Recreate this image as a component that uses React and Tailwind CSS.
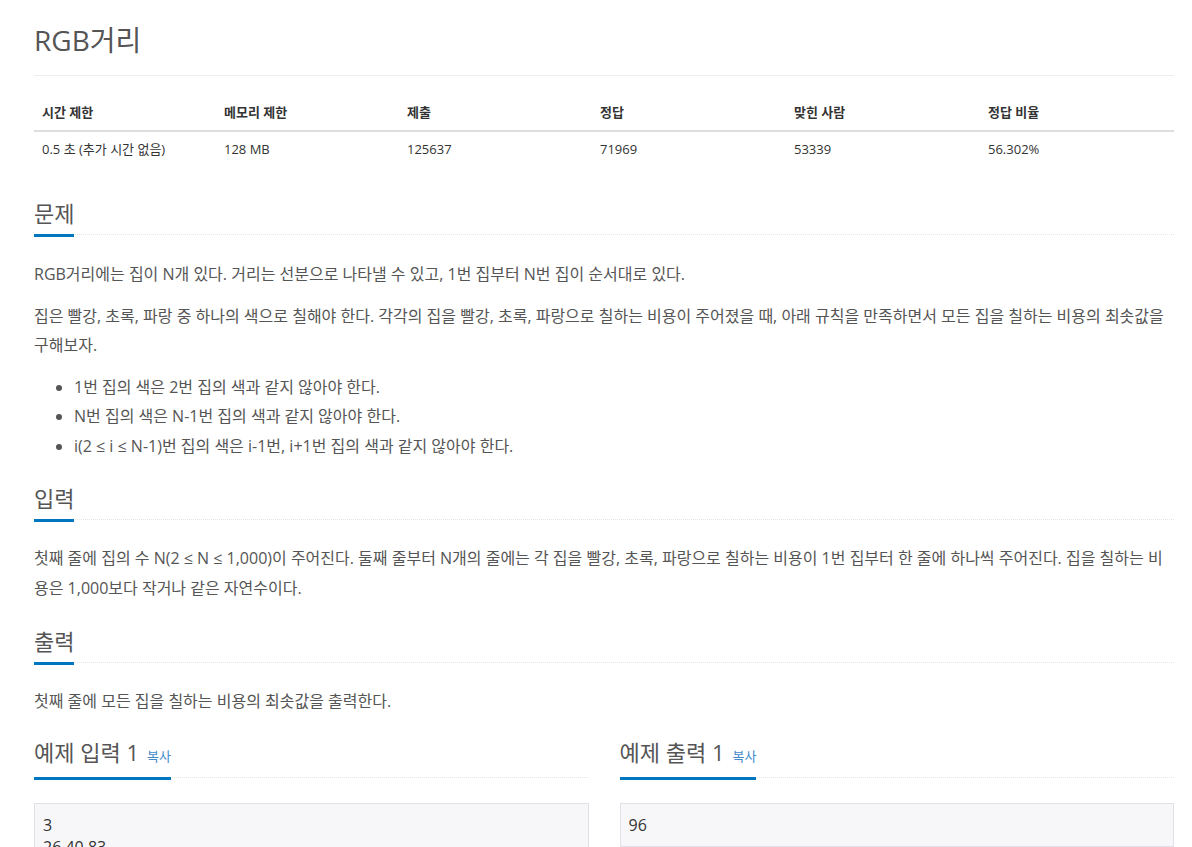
import React from 'react';

const font = "font-['Open_Sans','Noto_Sans_CJK_KR',sans-serif]";

const stats = [
    ['시간 제한', '0.5 초 (추가 시간 없음)'],
    ['메모리 제한', '128 MB'],
    ['제출', '125637'],
    ['정답', '71969'],
    ['맞힌 사람', '53339'],
    ['정답 비율', '56.302%'],
];

const Headline = ({ children, copy, className = '' }) => (
    <div className={`flex border-b border-dotted border-[#e5e5e5] ${className}`}>
        <h2 className="mb-[-3px] flex items-baseline border-b-[3px] border-[#0076c0] pb-[6px] text-[22px] leading-[30px] font-normal text-[#555]">
            {children}
            {copy && <span className="ml-[8px] text-[13px] text-[#428bca]">복사</span>}
        </h2>
    </div>
);

const Sample = ({ title, lines }) => (
    <div className="flex-1">
        <Headline copy>{title}</Headline>
        <pre className={`${font} mt-[25px] border border-[#e1e1e8] bg-[#f7f7f9] px-[8px] py-[10px] text-[16px] leading-[22px] text-[#333]`}>
            {lines.join('\n')}
        </pre>
    </div>
);

export default function App() {
    return (
        <div className={`${font} min-h-screen bg-white pl-[34px] text-[#555]`}>
            <div className="w-[1140px] pb-10">
                {/* titre */}
                <div className="border-b border-[#eee] pt-[20px] pb-[15px]">
                    <h1 className="text-[28px] leading-[40px] font-normal text-[#555]">RGB거리</h1>
                </div>

                {/* tableau des stats */}
                <div className="mt-[18px] grid grid-cols-[182px_183px_193px_194px_194px_1fr] text-[13px] text-[#333]">
                    {stats.map(([label]) => (
                        <div key={label} className="border-b-2 border-[#ddd] px-2 py-2 leading-[20px] font-bold">{label}</div>
                    ))}
                    {stats.map(([label, value]) => (
                        <div key={label} className="px-2 pt-[7px] pb-2 leading-[20px]">{value}</div>
                    ))}
                </div>

                {/* --- 문제 --- */}
                <Headline className="mt-[31px]">문제</Headline>
                <div className="mt-[25px] text-[16px] leading-[29.5px] break-all">
                    <p>RGB거리에는 집이 N개 있다. 거리는 선분으로 나타낼 수 있고, 1번 집부터 N번 집이 순서대로 있다.</p>
                    <p className="mt-[12px]">집은 빨강, 초록, 파랑 중 하나의 색으로 칠해야 한다. 각각의 집을 빨강, 초록, 파랑으로 칠하는 비용이 주어졌을 때, 아래 규칙을 만족하면서 모든 집을 칠하는 비용의 최솟값을 구해보자.</p>
                    <ul className="mt-[12px] list-disc pl-[40px]">
                        <li>1번 집의 색은 2번 집의 색과 같지 않아야 한다.</li>
                        <li>N번 집의 색은 N-1번 집의 색과 같지 않아야 한다.</li>
                        <li>i(2 ≤ i ≤ N-1)번 집의 색은 i-1번, i+1번 집의 색과 같지 않아야 한다.</li>
                    </ul>
                </div>

                {/* --- 입력 --- */}
                <Headline className="mt-[22px]">입력</Headline>
                <div className="mt-[24px] text-[16px] leading-[29.5px] break-all">
                    <p>첫째 줄에 집의 수 N(2 ≤ N ≤ 1,000)이 주어진다. 둘째 줄부터 N개의 줄에는 각 집을 빨강, 초록, 파랑으로 칠하는 비용이 1번 집부터 한 줄에 하나씩 주어진다. 집을 칠하는 비용은 1,000보다 작거나 같은 자연수이다.</p>
                </div>

                {/* --- 출력 --- */}
                <Headline className="mt-[23px]">출력</Headline>
                <div className="mt-[24px] text-[16px] leading-[29.5px] break-all">
                    <p>첫째 줄에 모든 집을 칠하는 비용의 최솟값을 출력한다.</p>
                </div>

                {/* exemples */}
                <div className="mt-[20px] flex gap-[31px]">
                    <Sample title="예제 입력 1" lines={['3', '26 40 83', '49 60 57', '13 89 99']} />
                    <Sample title="예제 출력 1" lines={['96']} />
                </div>
            </div>
        </div>
    );
}
